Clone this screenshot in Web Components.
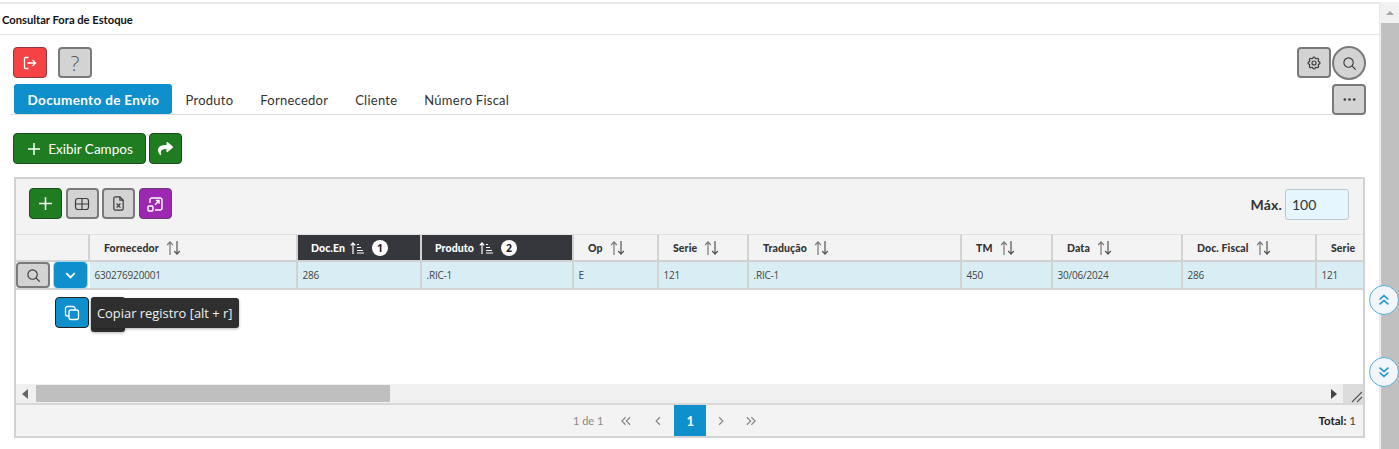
<!DOCTYPE html>
<html lang="pt">
<head>
<meta charset="utf-8">
<title>Consultar Fora de Estoque</title>
<style>
  html, body { margin: 0; height: 449px; overflow: hidden; background: #fff; }
  body { font-family: Lato, "Liberation Sans", sans-serif; color: #333; }
</style>
</head>
<body>
<app-page></app-page>

<script>
const ICONS = {
  exit: '<path d="M6.5 2.5H3.2a.7.7 0 0 0-.7.7v9.6a.7.7 0 0 0 .7.7h3.3" fill="none" stroke="currentColor" stroke-width="1.3"/><path d="M5.5 8h8M10.5 5l3 3-3 3" fill="none" stroke="currentColor" stroke-width="1.4"/>',
  plus: '<path d="M8 2v12M2 8h12" fill="none" stroke="currentColor" stroke-width="1.5"/>',
  share: '<path transform="scale(.03125)" fill="currentColor" d="M503.691 189.836L327.687 37.851C312.281 24.546 288 35.347 288 56.015v80.053C127.371 137.907 0 170.1 0 322.326c0 61.441 39.581 122.309 83.333 154.132 13.653 9.931 33.111-2.533 28.077-18.631C66.066 312.814 132.917 274.316 288 272.085V360c0 20.7 24.3 31.453 39.687 18.164l176.004-152c11.071-9.562 11.086-26.753 0-36.328z"/>',
  search: '<circle cx="7" cy="7" r="5" fill="none" stroke="currentColor" stroke-width="1.2"/><path d="m10.8 10.8 3.8 3.8" fill="none" stroke="currentColor" stroke-width="1.3"/>',
  dots: '<circle cx="3" cy="8" r="1.4" fill="currentColor"/><circle cx="8" cy="8" r="1.4" fill="currentColor"/><circle cx="13" cy="8" r="1.4" fill="currentColor"/>',
  table: '<rect x="1.5" y="2.5" width="13" height="11" rx="2.5" fill="none" stroke="currentColor" stroke-width="1.2"/><path d="M1.5 8h13M8 2.5v11" fill="none" stroke="currentColor" stroke-width="1.2"/>',
  excel: '<path d="M3 2.5A1.5 1.5 0 0 1 4.500 1H9.500L13 4.500V13.500A1.500 1.500 0 0 1 11.500 15H4.500A1.500 1.500 0 0 1 3 13.500z" fill="none" stroke="currentColor" stroke-width="1.3"/><path d="M9.500 1v3.500H13M6 8l4 4.500M10 8l-4 4.500" fill="none" stroke="currentColor" stroke-width="1.3"/>',
  expand: '<path d="M3 7V4a2 2 0 0 1 2-2h8a2 2 0 0 1 2 2v8a2 2 0 0 1-2 2H8" fill="none" stroke="currentColor" stroke-width="1.4"/><rect x="1" y="10" width="5" height="5" rx="1" fill="none" stroke="currentColor" stroke-width="1.4"/><path d="M8 9l4-4.500M8.800 4.500H12v3.200" fill="none" stroke="currentColor" stroke-width="1.4"/>',
  down: '<path d="m3.500 5.500 4.500 4.500 4.500-4.500" fill="none" stroke="currentColor" stroke-width="2"/>',
  copy: '<rect x="5" y="5" width="9.500" height="9.500" rx="2" fill="none" stroke="currentColor" stroke-width="1.300"/><path d="M11 5V3.500A2 2 0 0 0 9 1.500H3.500a2 2 0 0 0-2 2V9a2 2 0 0 0 2 2H5" fill="none" stroke="currentColor" stroke-width="1.300"/>',
  first: '<path d="M7.500 3 2.500 8l5 5M13.500 3l-5 5 5 5" fill="none" stroke="currentColor" stroke-width="1.600"/>',
  prev: '<path d="M10.500 3l-5 5 5 5" fill="none" stroke="currentColor" stroke-width="1.600"/>',
  next: '<path d="M5.500 3l5 5-5 5" fill="none" stroke="currentColor" stroke-width="1.600"/>',
  last: '<path d="M2.500 3l5 5-5 5M8.500 3l5 5-5 5" fill="none" stroke="currentColor" stroke-width="1.600"/>',
  dblup: '<path d="M3 7.500l5-4.500 5 4.500M3 13l5-4.500 5 4.500" fill="none" stroke="currentColor" stroke-width="1.7"/>',
  dbldown: '<path d="M3 3l5 4.500L13 3M3 8.500 8 13l5-4.500" fill="none" stroke="currentColor" stroke-width="1.7"/>',
  gear: '<g transform="scale(.6667)" fill="none" stroke="currentColor" stroke-width="1.8"><path d="M10.325 4.317c.426-1.756 2.924-1.756 3.35 0a1.724 1.724 0 0 0 2.573 1.066c1.543-.94 3.31.826 2.37 2.37a1.724 1.724 0 0 0 1.065 2.572c1.756.426 1.756 2.924 0 3.35a1.724 1.724 0 0 0-1.066 2.573c.94 1.543-.826 3.31-2.37 2.37a1.724 1.724 0 0 0-2.572 1.065c-.426 1.756-2.924 1.756-3.35 0a1.724 1.724 0 0 0-2.573-1.066c-1.543.94-3.31-.826-2.37-2.37a1.724 1.724 0 0 0-1.065-2.572c-1.756-.426-1.756-2.924 0-3.35a1.724 1.724 0 0 0 1.066-2.573c-.94-1.543.826-3.31 2.37-2.37 1 .608 2.296.07 2.572-1.065z"/><circle cx="12" cy="12" r="3"/></g>'
};

function svg(name, size) {
  return `<svg width="${size}" height="${size}" viewBox="0 0 16 16" aria-hidden="true">${ICONS[name]}</svg>`;
}

class IconButton extends HTMLElement {
  connectedCallback() {
    const kind = this.getAttribute('kind') || 'gray';
    const size = this.getAttribute('size') || 16;
    const icon = this.getAttribute('icon');
    const root = this.shadowRoot || this.attachShadow({ mode: 'open' });
    root.innerHTML = `
      <style>
        :host { display: inline-flex; box-sizing: border-box; width: var(--w, 34px); height: var(--h, 31px);
          align-items: center; justify-content: center; gap: 6px; border-radius: 4px; border: 1px solid #555;
          font: 13px Lato, sans-serif; flex: none; }
        :host([kind=gray]), :host(:not([kind])) { background: #d3d3d3; color: #3c3c3c; border: 2px solid #7a7a7a; }
        :host([kind=red]) { background: #f54245; color: #fff; border-color: #8a3a3c; }
        :host([kind=green]) { background: #1f7c21; color: #fff; border-color: #1d4d1f; }
        :host([kind=purple]) { background: #9c27b0; color: #fff; border-color: #6d3a78; }
        :host([kind=blue]) { background: #0f8fcb; color: #fff; border-color: #0f8fcb; }
        svg { display: block; }
      </style>
      ${icon ? svg(icon, size) : ''}<slot></slot>`;
  }
}
customElements.define('icon-button', IconButton);

class TabBar extends HTMLElement {
  constructor() {
    super();
    this.attachShadow({ mode: 'open' }).innerHTML = `
      <style>
        :host { display: flex; align-items: flex-end; height: 31px; margin: 5px 13px 0 11px; }
        .line { flex: 1; display: flex; height: 30px; border-bottom: 1px solid #dedede; padding-left: 3px; align-items: stretch;
          font: 13px Lato, sans-serif; letter-spacing: .25px; color: #333; }
        span { display: flex; align-items: center; padding: 2px 13.5px 0; }
        .on { background: #0f8fcb; color: #fff; font: 700 13.5px Lato, sans-serif; letter-spacing: .35px; border-radius: 3px; width: 158px; box-sizing: border-box; justify-content: center; padding: 2px 0 0 1px; }
      </style>
      <div class="line">
        <span class="on">Documento de Envio</span>
        <span>Produto</span><span>Fornecedor</span><span>Cliente</span><span>Número Fiscal</span>
      </div>
      <icon-button icon="dots" size="15"></icon-button>`;
  }
}
customElements.define('tab-bar', TabBar);

const COLS = [
  ['Fornecedor', 208, '630276920001'],
  ['Doc.En', 124, '286', 1],
  ['Produto', 152, '.RIC-1', 2],
  ['Op', 85, 'E'],
  ['Serie', 90, '121'],
  ['Tradução', 213, '.RIC-1'],
  ['TM', 91, '450'],
  ['Data', 130, '30/06/2024'],
  ['Doc. Fiscal', 134, '286'],
  ['Serie', 90, '121']
];

class DataGrid extends HTMLElement {
  constructor() {
    super();
    const tracks = '74px ' + COLS.map(c => c[1] + 'px').join(' ');
    const head = COLS.map(c => `
      <div class="th ${c[3] ? 'sorted' : ''}"><b>${c[0]}</b>${c[3]
        ? `<svg class="si" width="14" height="14" viewBox="0 0 14 14"><path d="M3 13V2M.8 4.300 3 1.800l2.200 2.500" fill="none" stroke="#fff" stroke-width="1.200"/><path d="M7 3.500h2M7 6.500h4M7 9.500h6M7 12h7" stroke="#fff" stroke-width="1.100"/></svg><i>${c[3]}</i>`
        : `<svg class="si" width="15" height="16" viewBox="0 0 15 16"><path d="M4 15V2M1.200 5 4 1.800 6.800 5" fill="none" stroke="#777" stroke-width="1.200"/><path d="M11 1v13M8.200 11 11 14.200 13.800 11" fill="none" stroke="#555" stroke-width="1.200"/></svg>`}</div>`).join('');
    const cells = COLS.map(c => `<div class="td">${c[2]}</div>`).join('');
    this.attachShadow({ mode: 'open' }).innerHTML = `
      <style>
        :host { display: flex; flex-direction: column; box-sizing: border-box; height: 261px; margin: 13px 14px 0 14px;
          border: 2px solid #d2d2d2; position: relative; background: #fff; }
        .bar { height: 55px; background: #f3f3f3; display: flex; align-items: flex-start; box-sizing: border-box; padding: 9px 14px 0 13px; gap: 3.5px; flex: none; }
        .bar icon-button { --w: 33px; }
        .bar .sp { flex: 1; }
        .bar label { font: 700 14px Lato, sans-serif; line-height: 33px; color: #333; margin-right: -.5px; letter-spacing: .2px; }
        .bar .inp { box-sizing: border-box; width: 64px; height: 31px; border: 1px solid #b9c9d2; border-radius: 3px; background: #e6f6fe; font: 14px Lato, sans-serif;
          display: flex; align-items: center; padding-left: 6px; margin-top: 1px; }
        .view { overflow: hidden; flex: none; height: 56px; }
        .table { display: grid; grid-template-columns: ${tracks}; grid-template-rows: 28px 28px; width: max-content; }
        .th, .td, .hd0, .td0 { box-sizing: border-box; border-right: 2px solid #d2d2d2; border-bottom: 2px solid #d2d2d2; display: flex; align-items: center; }
        .th { background: #f3f3f3; border-top: 1px solid #e2e2e2; padding-left: 14px; gap: 7px; font: 700 10.500px Lato, sans-serif; color: #333; }
        .th b { letter-spacing: .1px; }
        .th.sorted { background: #36373c; color: #fff; padding-left: 13px; gap: 5px; }
        .si { flex: none; }
        .th i { font: 700 10.500px "Open Sans", sans-serif; width: 16px; height: 16px; border-radius: 50%; background: #fff; color: #222; display: flex; align-items: center; justify-content: center; margin-left: 3px; }
        .td { background: #d9eef4; padding-left: 4.500px; font: 10px "Open Sans", sans-serif; letter-spacing: -.2px; color: #444; }
        .hd0 { background: #f3f3f3; border-top: 1px solid #e2e2e2; }
        .td0 { background: #fff; border-right: 0; padding-left: 0; gap: 4px; }
        .td0 icon-button { --h: 26px; }
        .td0 .s { --w: 34px; }
        .td0 .t { --w: 33px; box-shadow: 0 0 0 1px #9fd6f2; }
        .body { flex: 1; position: relative; }
        .hs { height: 19px; flex: none; background: #f0f0f0; display: flex; align-items: center; position: relative; }
        .hs .l { width: 0; height: 0; border: 5px solid transparent; border-right: 6px solid #666; border-left: 0; margin-left: 6px; }
        .hs .thumb { position: absolute; left: 20px; width: 354px; top: 1px; bottom: 1px; background: #bfbfbf; }
        .hs .r { position: absolute; right: 26px; width: 0; height: 0; border: 5px solid transparent; border-left: 6px solid #444; border-right: 0; }
        .hs .c { position: absolute; right: 0; top: 0; bottom: 0; width: 20px; background: #dcdcdc; }
        .hs svg { position: absolute; right: 0; bottom: 0; }
        .foot { height: 33px; flex: none; background: #f3f3f3; border-top: 2px solid #d8d8d8; box-sizing: border-box; display: grid; grid-template-columns: 557px auto 1fr; align-items: center; font: 11px Lato, sans-serif; color: #888; }
        .pager { display: flex; align-items: center; height: 100%; grid-column: 2; }
        .pager span { margin-right: 7px; }
        .pager .n { box-sizing: border-box; width: 32px; height: 31px; background: #0f8fcb; color: #fff; font: 700 13px Lato, sans-serif; display: flex; align-items: center; justify-content: center; }
        .pager svg { display: block; color: #888; }
        .pager .p { width: 32px; display: flex; justify-content: center; }
        .pager .q { width: 30px; display: flex; justify-content: center; }
        .tot { grid-column: 3; justify-self: end; padding-right: 7px; font: 11.500px Lato, sans-serif; color: #444; }
        .tot b { color: #222; }
        .pop { position: absolute; left: 39px; top: 7px; display: flex; }
        .pop icon-button { --h: 31px; border-color: #222; }
        .pop .under { position: absolute; left: 36px; top: 0; width: 34px; height: 35px; background: #2f2f2f; border-radius: 3px; box-shadow: 0 1px 3px rgba(0,0,0,.3); }
        .tip { position: absolute; left: 36px; top: 1px; height: 30px; width: 148px; box-sizing: border-box; background: #2f2f2f; color: #f0f0f0; border-radius: 3px; font: 12.900px "Open Sans", sans-serif;
          display: flex; align-items: center; padding-left: 6px; white-space: nowrap; box-shadow: 0 1px 3px rgba(0,0,0,.3); }
      </style>
      <div class="bar">
        <icon-button kind="green" icon="plus" size="17"></icon-button>
        <icon-button icon="table" size="16"></icon-button>
        <icon-button icon="excel" size="15"></icon-button>
        <icon-button kind="purple" icon="expand" size="16"></icon-button>
        <div class="sp"></div>
        <label>Máx.</label><div class="inp">100</div>
      </div>
      <div class="view">
        <div class="table">
          <div class="hd0"></div>${head}
          <div class="td0"><icon-button class="s" icon="search" size="15"></icon-button><icon-button class="t" kind="blue" icon="down" size="15"></icon-button></div>${cells}
        </div>
      </div>
      <div class="body">
        <div class="pop">
          <icon-button kind="blue" icon="copy" size="16"></icon-button>
          <div class="under"></div>
          <div class="tip">Copiar registro [alt + r]</div>
        </div>
      </div>
      <div class="hs">
        <div class="l"></div><div class="thumb"></div><div class="r"></div>
        <div class="c"></div>
        <svg width="12" height="12" viewBox="0 0 12 12"><path d="M1 11 11 1M6 11l5-5" stroke="#555" stroke-width="1.100"/></svg>
      </div>
      <div class="foot">
        <div class="pager">
          <span>1&nbsp;de&nbsp;1</span>
          <div class="p">${svg('first', 12)}</div><div class="p">${svg('prev', 12)}</div>
          <div class="n">1</div>
          <div class="q">${svg('next', 12)}</div><div class="q">${svg('last', 12)}</div>
        </div>
        <div class="tot"><b>Total:</b> 1</div>
      </div>`;
  }
}
customElements.define('data-grid', DataGrid);

class AppPage extends HTMLElement {
  constructor() {
    super();
    this.attachShadow({ mode: 'open' }).innerHTML = `
      <style>
        :host { display: flex; height: 449px; font-family: Lato, sans-serif; }
        main { flex: 1; min-width: 0; padding-top: 2px; }
        h1 { margin: 0; height: 33px; box-sizing: border-box; border-top: 2px solid #e9e9e9; border-bottom: 1px solid #e6e6e6; font: 700 11.200px Lato, sans-serif; color: #111; display: flex; align-items: center; padding-left: 2px; }
        .tools { display: flex; margin: 12px 13px 0 13px; gap: 11px; height: 32px; }
        .tools .sp { flex: 1; }
        .tools .r { display: flex; gap: 1px; }
        .round { --w: 34px; --h: 34px; border-radius: 50%; margin-top: -1px; }
        .q { font: 300 21px "Open Sans", sans-serif; color: #555; }
        .act { display: flex; gap: 3px; margin: 18px 13px 0; }
        .act icon-button { --h: 31px; }
        .act .go { --w: 33px; }
        .wide { --w: 133px; font: 13.500px Lato, sans-serif; }
        aside { width: 20px; flex: none; background: #f1f1f1; margin-top: 2px; border-left: 1px solid #e8e8e8; box-sizing: border-box; position: relative; display: flex; flex-direction: column; }
        aside .up { height: 21px; display: flex; justify-content: center; align-items: center; }
        aside .up::before { content: ""; border: 4px solid transparent; border-bottom: 4px solid #a3a3a3; border-top: 0; }
        aside .th { flex: 1; background: #c0c0c0; margin-left: 1px; }
        .jump { position: absolute; left: -11px; width: 30px; height: 30px; box-sizing: border-box; border-radius: 50%; background: #f2f6f8; border: 1px solid #56afdb; color: #1b93d1; display: flex; align-items: center; justify-content: center; }
      </style>
      <main>
        <h1>Consultar Fora de Estoque</h1>
        <div class="tools">
          <icon-button kind="red" icon="exit" size="16"></icon-button>
          <icon-button><span class="q">?</span></icon-button>
          <div class="sp"></div>
          <div class="r">
            <icon-button icon="gear" size="16"></icon-button>
            <icon-button class="round" icon="search" size="15"></icon-button>
          </div>
        </div>
        <tab-bar></tab-bar>
        <div class="act">
          <icon-button class="wide" kind="green" icon="plus" size="16">Exibir Campos</icon-button>
          <icon-button class="go" kind="green" icon="share" size="15"></icon-button>
        </div>
        <data-grid></data-grid>
      </main>
      <aside>
        <div class="up"></div><div class="th"></div>
        <div class="jump" style="top:283px">${svg('dblup', 14)}</div>
        <div class="jump" style="top:355px">${svg('dbldown', 14)}</div>
      </aside>`;
  }
}
customElements.define('app-page', AppPage);
</script>
</body>
</html>
